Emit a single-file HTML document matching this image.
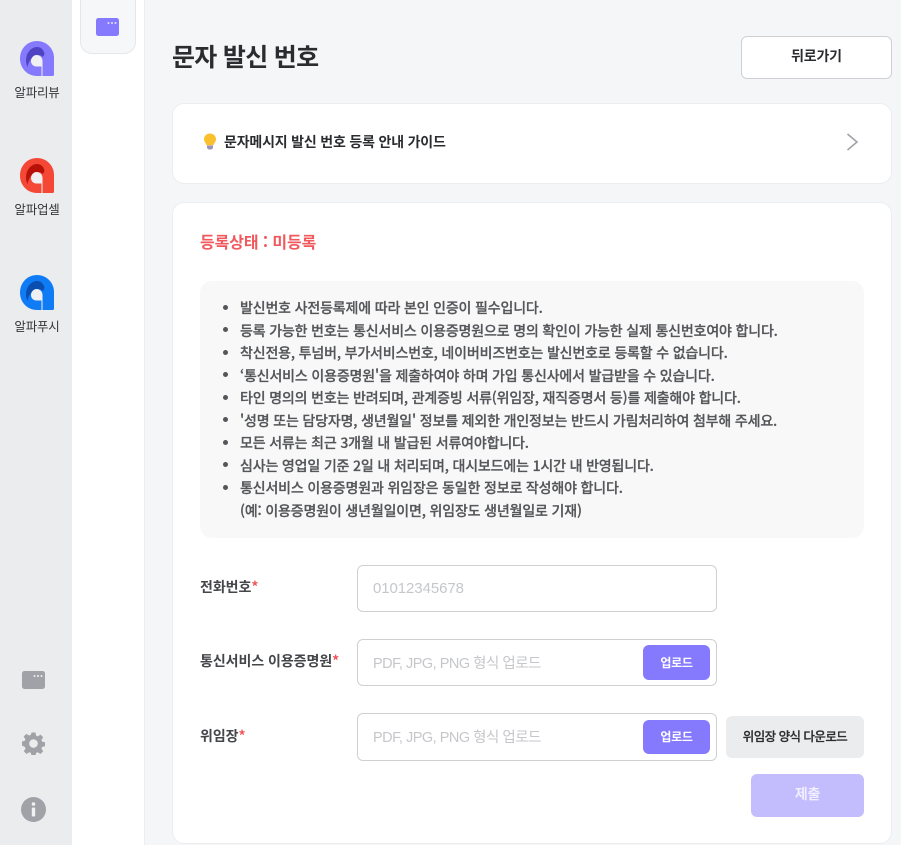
<!DOCTYPE html>
<html lang="ko">
<head>
<meta charset="utf-8">
<title>문자 발신 번호</title>
<style>
*{box-sizing:border-box}
html,body{margin:0;padding:0;width:901px;height:845px;overflow:hidden}
body{position:relative;background:#f5f6f8;font-family:"Liberation Sans","Noto Sans CJK KR",sans-serif;color:#2b2b2f}
.a{position:absolute}
.t{position:absolute;white-space:nowrap;font-family:"Noto Sans CJK KR","Liberation Sans",sans-serif}
.rail{left:0;top:0;width:72px;height:845px;background:#ebecee}
.side{left:72px;top:0;width:73px;height:845px;background:#fff;border-right:1px solid #ecedef}
.tab{left:80px;top:-10px;width:56px;height:64px;background:#f6f7f9;border:1px solid #e6e7ea;border-radius:12px}
.lab{left:0;width:74px;text-align:center;font-size:12.5px;line-height:16px;color:#33363a;letter-spacing:-.2px}
.card{background:#fff;border:1px solid #ecedef;border-radius:12px}
.info{left:200px;top:281px;width:664px;height:257px;background:#f8f8f9;border-radius:12px}
.li{left:240px;margin-top:1px;font-size:14px;line-height:22.4px;font-weight:500;color:#555659;letter-spacing:-.16px;-webkit-text-stroke:.25px #555659}
.dot{position:absolute;left:222.5px;width:5px;height:5px;border-radius:50%;background:#55565a}
.fl{left:200px;font-size:14px;line-height:20px;font-weight:700;color:#44464a;letter-spacing:-.05px}
.fl b{color:#f0555a;font-weight:700}
.inp{left:357px;width:360px;background:#fff;border:1px solid #cfd0d3;border-radius:6px}
.ph{left:373px;font-size:14.5px;line-height:20px;color:#c6c7ca;letter-spacing:-.5px;font-family:"Liberation Sans","Noto Sans CJK KR",sans-serif}
.up{left:643px;width:67px;background:#8579fd;border-radius:6px;color:#fff;font-size:12px;font-weight:700;text-align:center;letter-spacing:-.3px}
</style>
</head>
<body>
<div class="a rail"></div>
<div class="a side"></div>
<div class="a tab"></div>

<svg class="a" style="left:96px;top:18px" width="23" height="18" viewBox="0 0 23 18"><rect width="23" height="18" rx="2.5" fill="#8579fd"/><circle cx="12.5" cy="5" r="1" fill="#e4e1ff"/><circle cx="16" cy="5" r="1" fill="#e4e1ff"/><circle cx="19.5" cy="5" r="1" fill="#e4e1ff"/></svg>

<svg class="a" style="left:19px;top:40px" width="36" height="37" viewBox="0 0 36 37"><path d="M18 1C27.5 1 35 8.5 35 18V34.5Q35 36 33.5 36H18C8.5 36 1 28.5 1 18.5S8.5 1 18 1Z" fill="#8579fd"/><path d="M8.5 27C4 16 11 7 18 7C22 7 25 10 25.5 14L24 17C20 13 11 15 8.5 27Z" fill="#4f43c4"/><path d="M17.5 15C21 15 23.5 17.5 23.5 21V36H22.5V26.5H17.5C14.2 26.5 12 24 12 21S14.5 15 17.5 15Z" fill="#f0f0f3"/></svg>
<div class="t a lab" style="top:84px">알파리뷰</div>

<svg class="a" style="left:19px;top:157px" width="36" height="37" viewBox="0 0 36 37"><path d="M18 1C27.5 1 35 8.5 35 18V34.5Q35 36 33.5 36H18C8.5 36 1 28.5 1 18.5S8.5 1 18 1Z" fill="#f44736"/><path d="M8.5 27C4 16 11 7 18 7C22 7 25 10 25.5 14L24 17C20 13 11 15 8.5 27Z" fill="#b81208"/><path d="M17.5 15C21 15 23.5 17.5 23.5 21V36H22.5V26.5H17.5C14.2 26.5 12 24 12 21S14.5 15 17.5 15Z" fill="#f0f0f3"/></svg>
<div class="t a lab" style="top:201px">알파업셀</div>

<svg class="a" style="left:19px;top:274px" width="36" height="37" viewBox="0 0 36 37"><path d="M18 1C27.5 1 35 8.5 35 18V34.5Q35 36 33.5 36H18C8.5 36 1 28.5 1 18.5S8.5 1 18 1Z" fill="#0f7cf5"/><path d="M8.5 27C4 16 11 7 18 7C22 7 25 10 25.5 14L24 17C20 13 11 15 8.5 27Z" fill="#0a4fb0"/><path d="M17.5 15C21 15 23.5 17.5 23.5 21V36H22.5V26.5H17.5C14.2 26.5 12 24 12 21S14.5 15 17.5 15Z" fill="#f0f0f3"/></svg>
<div class="t a lab" style="top:318px">알파푸시</div>

<svg class="a" style="left:22px;top:671px" width="23" height="18" viewBox="0 0 23 18"><rect width="23" height="18" rx="2.5" fill="#a0a2a7"/><circle cx="12.5" cy="5" r="1" fill="#eee"/><circle cx="16" cy="5" r="1" fill="#eee"/><circle cx="19.5" cy="5" r="1" fill="#eee"/></svg>

<svg class="a" style="left:22px;top:732px" width="23" height="23" viewBox="0 0 24 24"><path fill="#a0a2a7" fill-rule="evenodd" d="M10 .5h4l.7 3.3 1.7.7 2.9-1.8 2.8 2.8-1.8 2.9.7 1.7 3.3.7v4l-3.3.7-.7 1.7 1.8 2.900-2.800 2.800-2.900-1.800-1.700.7-.7 3.300h-4l-.7-3.300-1.700-.7-2.900 1.800-2.800-2.800 1.800-2.900-.7-1.700L-.5 14v-4l3.300-.7.7-1.700L1.700 4.700l2.800-2.800 2.900 1.800 1.700-.7zM12 7.500a4.500 4.500 0 1 0 0 9 4.500 4.500 0 0 0 0-9z"/></svg>

<svg class="a" style="left:21px;top:797px" width="25" height="25" viewBox="0 0 25 25"><circle cx="12.5" cy="12.5" r="12.5" fill="#a0a2a7"/><circle cx="12.5" cy="7" r="1.8" fill="#f2f2f3"/><rect x="10.8" y="10.5" width="3.4" height="9" rx="1" fill="#f2f2f3"/></svg>

<div class="t a" style="left:172px;top:38px;font-size:25px;line-height:36px;font-weight:700;color:#2b2c30;letter-spacing:-.7px">문자 발신 번호</div>
<div class="a t" style="left:741px;top:36px;width:151px;height:43px;background:#fff;border:1px solid #cfd0d3;border-radius:6px;text-align:center;font-size:14px;line-height:39px;font-weight:700;color:#2b2c30;letter-spacing:-.2px">뒤로가기</div>

<div class="a card" style="left:172px;top:103px;width:720px;height:81px"></div>
<svg class="a" style="left:203px;top:133px" width="14" height="17" viewBox="0 0 14 17"><path d="M7 .5C3.5.5 1 3 1 6.2c0 2.500 1.800 3.600 2.500 6h7c.7-2.400 2.500-3.500 2.500-6C13 3 10.500.5 7 .5z" fill="#fbc02d"/><path d="M4 12.500h6v2.500l-1.500 1.500h-3L4 15z" fill="#9c94b8"/></svg>
<div class="t a" style="left:224px;top:132px;font-size:14px;line-height:20px;font-weight:700;color:#2b2c30;letter-spacing:-.19px">문자메시지 발신 번호 등록 안내 가이드</div>
<svg class="a" style="left:846px;top:133px" width="13" height="18" viewBox="0 0 13 18"><path d="M1.500 1l9.500 8-9.500 8" fill="none" stroke="#a0a2a6" stroke-width="1.600"/></svg>

<div class="a card" style="left:172px;top:202px;width:720px;height:642px"></div>
<div class="t a" style="left:200px;top:229px;font-size:16px;line-height:24px;font-weight:700;color:#f0595e;letter-spacing:-.1px">등록상태 : 미등록</div>

<div class="a info"></div>
<i class="dot" style="top:305px"></i><div class="t a li" style="top:296px">발신번호 사전등록제에 따라 본인 인증이 필수입니다.</div>
<i class="dot" style="top:327px"></i><div class="t a li" style="top:319px">등록 가능한 번호는 통신서비스 이용증명원으로 명의 확인이 가능한 실제 통신번호여야 합니다.</div>
<i class="dot" style="top:350px"></i><div class="t a li" style="top:341px">착신전용, 투넘버, 부가서비스번호, 네이버비즈번호는 발신번호로 등록할 수 없습니다.</div>
<i class="dot" style="top:372px"></i><div class="t a li" style="top:364px">‘통신서비스 이용증명원'을 제출하여야 하며 가입 통신사에서 발급받을 수 있습니다.</div>
<i class="dot" style="top:395px"></i><div class="t a li" style="top:386px">타인 명의의 번호는 반려되며, 관계증빙 서류(위임장, 재직증명서 등)를 제출해야 합니다.</div>
<i class="dot" style="top:417px"></i><div class="t a li" style="top:409px">'성명 또는 담당자명, 생년월일' 정보를 제외한 개인정보는 반드시 가림처리하여 첨부해 주세요.</div>
<i class="dot" style="top:440px"></i><div class="t a li" style="top:431px">모든 서류는 최근 3개월 내 발급된 서류여야합니다.</div>
<i class="dot" style="top:462px"></i><div class="t a li" style="top:454px">심사는 영업일 기준 2일 내 처리되며, 대시보드에는 1시간 내 반영됩니다.</div>
<i class="dot" style="top:485px"></i><div class="t a li" style="top:476px">통신서비스 이용증명원과 위임장은 동일한 정보로 작성해야 합니다.</div>
<div class="t a li" style="top:499px">(예: 이용증명원이 생년월일이면, 위임장도 생년월일로 기재)</div>

<div class="t a fl" style="top:577px">전화번호<b>*</b></div>
<div class="a inp" style="top:565px;height:47px"></div>
<div class="t a ph" style="top:579px;font-size:15px;letter-spacing:-.08px">01012345678</div>

<div class="t a fl" style="top:651px">통신서비스 이용증명원<b>*</b></div>
<div class="a inp" style="top:639px;height:47px"></div>
<div class="t a ph" style="top:654px">PDF, JPG, PNG 형식 업로드</div>
<div class="t a up" style="top:645px;height:35px;line-height:35px">업로드</div>

<div class="t a fl" style="top:726px">위임장<b>*</b></div>
<div class="a inp" style="top:713px;height:48px"></div>
<div class="t a ph" style="top:728px">PDF, JPG, PNG 형식 업로드</div>
<div class="t a up" style="top:720px;height:34px;line-height:34px">업로드</div>

<div class="t a" style="left:726px;top:716px;width:138px;height:42px;background:#ebecee;border-radius:6px;text-align:center;font-size:12.5px;line-height:40px;font-weight:500;color:#2b2c30;letter-spacing:-.55px;-webkit-text-stroke:.2px #2b2c30">위임장 양식 다운로드</div>
<div class="t a" style="left:751px;top:774px;width:113px;height:43px;background:#c3bdfd;border-radius:6px;text-align:center;font-size:14px;line-height:40px;font-weight:700;color:#f1efff;letter-spacing:-.2px">제출</div>
</body>
</html>
